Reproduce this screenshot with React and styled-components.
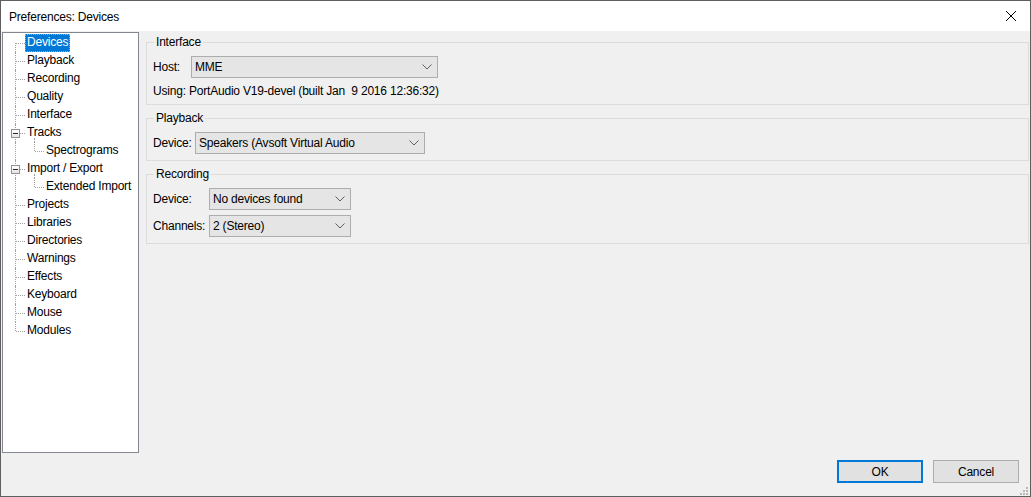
import React from "react";
import styled, { createGlobalStyle } from "styled-components";

const GlobalStyle = createGlobalStyle`
  html, body {
    margin: 0;
    padding: 0;
    background: #ffffff;
  }
  body {
    font-family: "Segoe UI", "Liberation Sans", Arial, sans-serif;
    font-size: 12px;
    letter-spacing: -0.2px;
    color: #000;
  }
`;

const Window = styled.div`
  width: 1031px;
  height: 497px;
  box-sizing: border-box;
  border: 1px solid #5f5f5f;
  border-top: none;
  display: flex;
  flex-direction: column;
  background: #f0f0f0;
`;

const TitleBar = styled.div`
  height: 31px;
  flex: none;
  background: #ffffff;
  border-top: 1px solid #5f5f5f;
  display: flex;
  align-items: center;
  justify-content: space-between;
  padding: 0 9px 0 8px;
  box-sizing: border-box;
`;

const Title = styled.span`
  font-size: 12px;
  padding-top: 1px;
`;

const CloseButton = styled.div`
  width: 20px;
  height: 20px;
  display: flex;
  align-items: center;
  justify-content: center;
`;

const Body = styled.div`
  flex: 1;
  display: flex;
  min-height: 0;
  padding: 1px 1px 0 1px;
`;

const TreePanel = styled.div`
  width: 137px;
  height: 421px;
  flex: none;
  box-sizing: border-box;
  background: #ffffff;
  border: 1px solid #828790;
  padding-top: 1px;
`;

const Row = styled.div`
  height: 18px;
  display: flex;
  align-items: center;
`;

const Gutter = styled.div`
  position: relative;
  width: ${(p) => p.$width}px;
  height: 18px;
  flex: none;
`;

const VLine = styled.div`
  position: absolute;
  left: ${(p) => p.$x}px;
  top: ${(p) => p.$top}px;
  bottom: ${(p) => p.$bottom}px;
  border-left: 1px dotted #a0a0a0;
`;

const HLine = styled.div`
  position: absolute;
  left: ${(p) => p.$x}px;
  top: 9px;
  width: ${(p) => p.$w}px;
  border-top: 1px dotted #a0a0a0;
`;

const ExpandBox = styled.div`
  position: absolute;
  left: 8px;
  top: 5px;
  width: 9px;
  height: 9px;
  box-sizing: border-box;
  border: 1px solid #919191;
  background: linear-gradient(#ffffff, #e4e4e4);
  display: flex;
  align-items: center;
  justify-content: center;
  &::after {
    content: "";
    width: 5px;
    height: 1px;
    background: #2b2b2b;
  }
`;

const Label = styled.span`
  padding: 1px 2px 2px 2px;
  line-height: 15px;
  white-space: nowrap;
  background: ${(p) => (p.$selected ? "#0078d7" : "transparent")};
  color: ${(p) => (p.$selected ? "#ffffff" : "#000")};
  outline: ${(p) => (p.$selected ? "1px dotted #f0a030" : "none")};
  outline-offset: -1px;
`;

const Content = styled.div`
  flex: 1;
  display: flex;
  flex-direction: column;
  gap: 6px;
  padding: 3px 0 0 7px;
`;

const Group = styled.fieldset`
  margin: 0;
  border: 1px solid #dcdcdc;
  padding: 7px 6px 0 6px;
  height: ${(p) => p.$height}px;
  box-sizing: border-box;
  display: flex;
  flex-direction: column;
  gap: ${(p) => p.$gap || 5}px;
`;

const Legend = styled.legend`
  padding: 0 2px;
  margin-left: 1px;
  line-height: 14px;
`;

const FieldRow = styled.div`
  display: flex;
  align-items: center;
`;

const FieldLabel = styled.span`
  width: ${(p) => p.$width}px;
  flex: none;
`;

const Select = styled.div`
  width: ${(p) => p.$width}px;
  height: 22px;
  box-sizing: border-box;
  border: 1px solid #adadad;
  background: #e5e5e5;
  display: flex;
  align-items: center;
  justify-content: space-between;
  padding: 0 5px 0 3px;
`;

const InfoText = styled.div`
  padding-top: 1px;
  line-height: 14px;
`;

const Footer = styled.div`
  height: 43px;
  flex: none;
  display: flex;
  justify-content: flex-end;
  align-items: flex-start;
  gap: 10px;
  padding: 7px 11px 0 0;
  box-sizing: border-box;
  position: relative;
`;

const Button = styled.div`
  width: 86px;
  height: 23px;
  box-sizing: border-box;
  background: #e1e1e1;
  border: ${(p) => (p.$default ? "2px solid #0078d7" : "1px solid #adadad")};
  display: flex;
  align-items: center;
  justify-content: center;
`;

const Grip = styled.div`
  position: absolute;
  right: 1px;
  bottom: 1px;
  width: 10px;
  height: 10px;
`;

const Chevron = () => (
  <svg width="10" height="6" viewBox="0 0 10 6">
    <path d="M0.5 0.5 L5 5 L9.5 0.5" fill="none" stroke="#606060" strokeWidth="1" />
  </svg>
);

const tree = [
  { label: "Devices", selected: true },
  { label: "Playback" },
  { label: "Recording" },
  { label: "Quality" },
  { label: "Interface" },
  { label: "Tracks", expanded: true },
  { label: "Spectrograms", child: true },
  { label: "Import / Export", expanded: true },
  { label: "Extended Import", child: true },
  { label: "Projects" },
  { label: "Libraries" },
  { label: "Directories" },
  { label: "Warnings" },
  { label: "Effects" },
  { label: "Keyboard" },
  { label: "Mouse" },
  { label: "Modules" },
];

const TreeRow = ({ item, first, last }) => {
  if (item.child) {
    return (
      <Row>
        <Gutter $width={41}>
          <VLine $x={12} $top={0} $bottom={0} />
          <VLine $x={31} $top={0} $bottom={9} />
          <HLine $x={32} $w={9} />
        </Gutter>
        <Label>{item.label}</Label>
      </Row>
    );
  }
  return (
    <Row>
      <Gutter $width={22}>
        <VLine $x={12} $top={first ? 9 : 0} $bottom={last ? 9 : 0} />
        <HLine $x={13} $w={9} />
        {item.expanded && <ExpandBox />}
        {item.expanded && <VLine $x={31} $top={14} $bottom={0} />}
      </Gutter>
      <Label $selected={item.selected}>{item.label}</Label>
    </Row>
  );
};

const App = () => {
  return (
    <>
      <GlobalStyle />
      <Window>
        <TitleBar>
          <Title>Preferences: Devices</Title>
          <CloseButton>
            <svg width="12" height="12" viewBox="0 0 12 12">
              <path d="M1 1 L11 11 M11 1 L1 11" stroke="#000" strokeWidth="1" />
            </svg>
          </CloseButton>
        </TitleBar>
        <Body>
          <TreePanel>
            {tree.map((item, i) => (
              <TreeRow
                key={item.label}
                item={item}
                first={i === 0}
                last={i === tree.length - 1}
              />
            ))}
          </TreePanel>
          <Content>
            <Group $height={70} $gap={5}>
              <Legend>Interface</Legend>
              <FieldRow>
                <FieldLabel $width={38}>Host:</FieldLabel>
                <Select $width={247}>
                  <span>MME</span>
                  <Chevron />
                </Select>
              </FieldRow>
              <InfoText>Using: PortAudio V19-devel (built Jan&nbsp;&nbsp;9 2016 12:36:32)</InfoText>
            </Group>
            <Group $height={50}>
              <Legend>Playback</Legend>
              <FieldRow>
                <FieldLabel $width={42}>Device:</FieldLabel>
                <Select $width={230}>
                  <span>Speakers (Avsoft Virtual Audio</span>
                  <Chevron />
                </Select>
              </FieldRow>
            </Group>
            <Group $height={77} $gap={5}>
              <Legend>Recording</Legend>
              <FieldRow>
                <FieldLabel $width={56}>Device:</FieldLabel>
                <Select $width={142}>
                  <span>No devices found</span>
                  <Chevron />
                </Select>
              </FieldRow>
              <FieldRow>
                <FieldLabel $width={56}>Channels:</FieldLabel>
                <Select $width={142}>
                  <span>2 (Stereo)</span>
                  <Chevron />
                </Select>
              </FieldRow>
            </Group>
          </Content>
        </Body>
        <Footer>
          <Button $default>OK</Button>
          <Button>Cancel</Button>
          <Grip>
            <svg width="10" height="10" viewBox="0 0 10 10">
              {[
                [8, 2], [8, 5], [8, 8], [5, 5], [5, 8], [2, 8],
              ].map(([x, y]) => (
                <rect key={`${x}-${y}`} x={x - 1} y={y - 1} width="2" height="2" fill="#b8b8b8" />
              ))}
            </svg>
          </Grip>
        </Footer>
      </Window>
    </>
  );
};

export default App;
